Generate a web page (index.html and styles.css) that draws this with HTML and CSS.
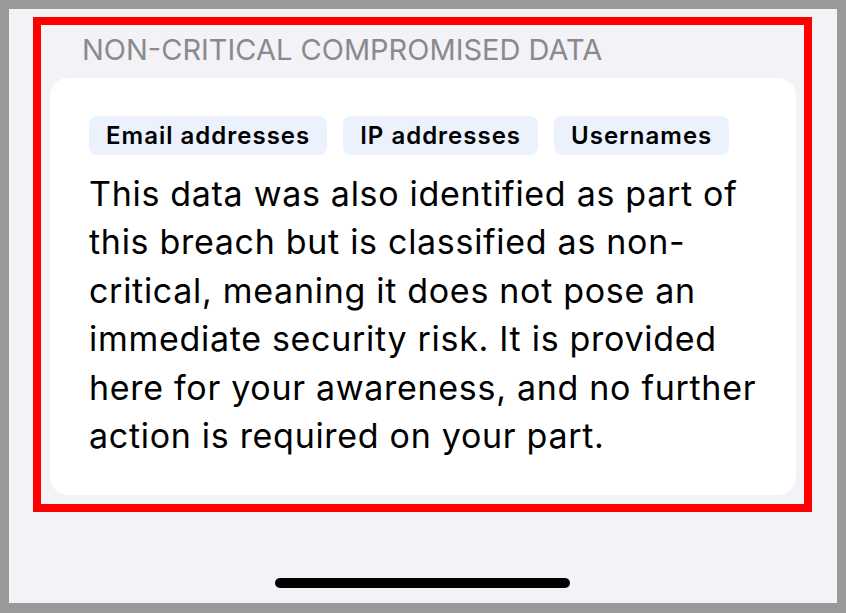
FILE: index.html
```html
<!DOCTYPE html>
<html lang="en">
<head>
    <meta charset="UTF-8">
    <meta name="viewport" content="width=device-width, initial-scale=1.0">
    <title>Non-critical compromised data</title>
    <link rel="stylesheet" href="styles.css">
</head>
<body>

<div class="screen">
    <section class="section">
        <h2 class="section-title">NON-CRITICAL COMPROMISED DATA</h2>
        <div class="card">
            <div class="chips">
                <span class="chip">Email addresses</span>
                <span class="chip">IP addresses</span>
                <span class="chip">Usernames</span>
            </div>
            <p class="card-text">This data was also identified as part of this breach but is classified as non-critical, meaning it does not pose an immediate security risk. It is provided here for your awareness, and no further action is required on your part.</p>
        </div>
    </section>
    <div class="home-indicator"></div>
</div>

</body>
</html>
```

FILE: styles.css
```css
body {
    margin: 0;
    background-color: #999999;
    font-family: 'Inter', 'Noto Sans', sans-serif;
    color: #000;
}
.screen {
    margin: 9px;
    width: 828px;
    height: 594px;
    box-sizing: border-box;
    padding: 8px 25px 15px 24px;
    background-color: #f2f2f7;
    display: flex;
    flex-direction: column;
}
.section {
    border: 8px solid #ff0000;
}
.section-title {
    margin: 0 0 10px;
    padding: 7px 0 0 41px;
    font-size: 29px;
    line-height: 36px;
    font-weight: 400;
    color: #8a8a8e;
}
.card {
    margin: 0 8px 9px 9px;
    padding: 38px 39px 35px;
    background-color: #fff;
    border-radius: 18px;
}
.chips {
    display: flex;
    gap: 16px;
    margin-bottom: 15px;
}
.chip {
    height: 39px;
    padding: 0 17px;
    display: flex;
    align-items: center;
    background-color: #ebf2fd;
    border-radius: 8px;
    font-size: 24px;
    font-weight: 600;
    letter-spacing: 1px;
}
.card-text {
    margin: 0;
    font-size: 34px;
    line-height: 48.4px;
    letter-spacing: 0.7px;
}
.home-indicator {
    margin-top: auto;
    align-self: center;
    width: 295px;
    height: 10px;
    border-radius: 5px;
    background-color: #000;
}
```
